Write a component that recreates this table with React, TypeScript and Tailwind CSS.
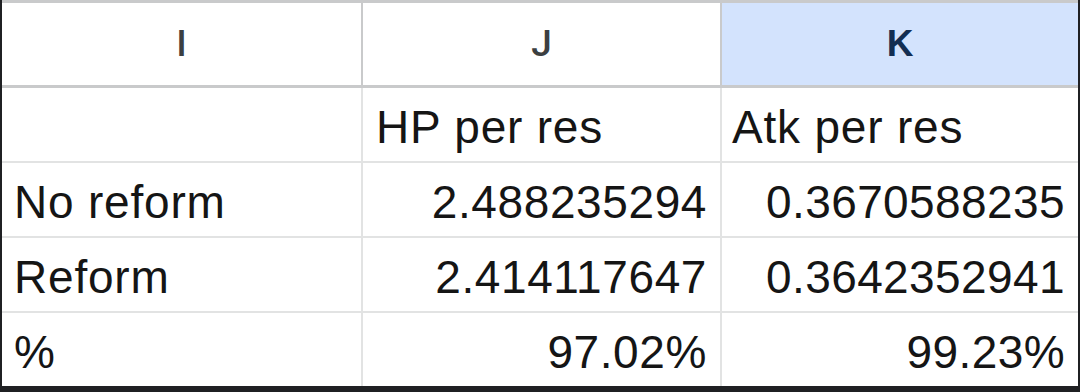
import React from "react";

const rows: { label: string; j: string; k: string; right: boolean }[] = [
  { label: "", j: "HP per res", k: "Atk per res", right: false },
  { label: "No reform", j: "2.488235294", k: "0.3670588235", right: true },
  { label: "Reform", j: "2.414117647", k: "0.3642352941", right: true },
  { label: "%", j: "97.02%", k: "99.23%", right: true },
];

export default function App() {
  return (
    <div
      className="w-[1080px] h-[392px] bg-[#1f2023] overflow-hidden"
      style={{ fontFamily: '"Liberation Sans", Arial, sans-serif' }}
    >
      <div className="ml-[2px] w-[1076px] h-[386px] bg-[#e2e3e3] flex flex-col">
        <div className="h-[3px] bg-[#c9cacb]" />
        <div className="grid grid-cols-[359px_357px_356px] gap-x-[2px] bg-[#c9cacb] h-[82px]">
          <div className="bg-white flex items-center justify-center text-[37px] font-medium text-[#3c3f41] font-[Roboto,sans-serif]">I</div>
          <div className="bg-white flex items-center justify-center text-[37px] font-medium text-[#3c3f41] font-[Roboto,sans-serif]">J</div>
          <div className="bg-[#d3e3fd] flex items-center justify-center text-[37px] font-bold text-[#132e52]">K</div>
        </div>
        <div className="h-[3px] bg-[#c9cacb]" />
        <div className="flex flex-col gap-y-[2px]">
          {rows.map((r, i) => (
            <div key={i} className="grid grid-cols-[359px_357px_356px] gap-x-[2px] h-[73px]">
              <div className="bg-white flex items-center px-[12px] text-[46px] tracking-[0.8px] text-[#151515] leading-none pt-[4px]">
                {r.label}
              </div>
              <div
                className={
                  r.right
                    ? "bg-white flex items-center justify-end px-[13px] text-[46px] tracking-[0.6px] text-[#151515] leading-none pt-[4px]"
                    : "bg-white flex items-center justify-start px-[13px] text-[46px] tracking-[0.8px] text-[#151515] leading-none pt-[4px]"
                }
              >
                {r.j}
              </div>
              <div
                className={
                  r.right
                    ? "bg-white flex items-center justify-end px-[13px] text-[46px] tracking-[0.4px] text-[#151515] leading-none pt-[4px]"
                    : "bg-white flex items-center justify-start px-[10px] text-[46px] tracking-[0.8px] text-[#151515] leading-none pt-[4px]"
                }
              >
                {r.k}
              </div>
            </div>
          ))}
        </div>
      </div>
    </div>
  );
}
